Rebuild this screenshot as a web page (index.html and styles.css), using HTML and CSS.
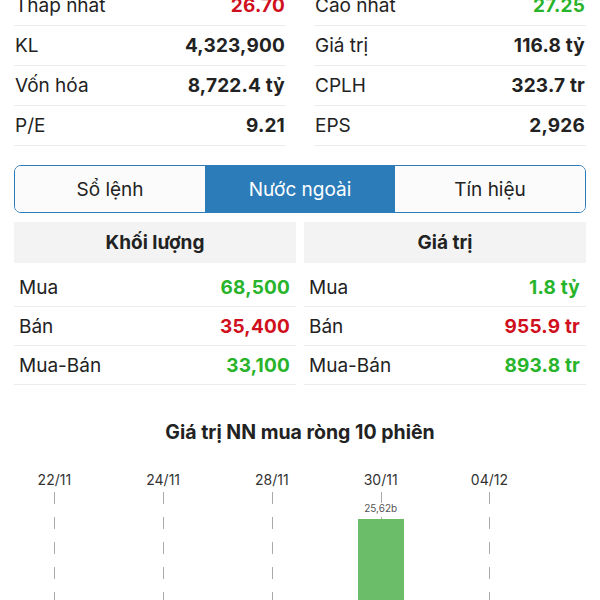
FILE: index.html
```html
<!DOCTYPE html>
<html lang="vi">
<head>
  <meta charset="UTF-8">
  <meta name="viewport" content="width=device-width, initial-scale=1.0">
  <title>Nước ngoài</title>
  <link rel="stylesheet" href="styles.css">
</head>
<body>
  <div class="stats">
    <div class="col">
      <div class="row"><span>Thấp nhất</span><b class="red">26.70</b></div>
      <div class="row"><span>KL</span><b>4,323,900</b></div>
      <div class="row"><span>Vốn hóa</span><b>8,722.4 tỷ</b></div>
      <div class="row"><span>P/E</span><b>9.21</b></div>
    </div>
    <div class="col">
      <div class="row"><span>Cao nhất</span><b class="green">27.25</b></div>
      <div class="row"><span>Giá trị</span><b>116.8 tỷ</b></div>
      <div class="row"><span>CPLH</span><b>323.7 tr</b></div>
      <div class="row"><span>EPS</span><b>2,926</b></div>
    </div>
  </div>

  <div class="tabs">
    <div class="tab">Sổ lệnh</div>
    <div class="tab active">Nước ngoài</div>
    <div class="tab">Tín hiệu</div>
  </div>

  <div class="foreign">
    <div class="table">
      <div class="head">Khối lượng</div>
      <div class="row"><span>Mua</span><b class="green">68,500</b></div>
      <div class="row"><span>Bán</span><b class="red">35,400</b></div>
      <div class="row"><span>Mua-Bán</span><b class="green">33,100</b></div>
    </div>
    <div class="table">
      <div class="head">Giá trị</div>
      <div class="row"><span>Mua</span><b class="green">1.8 tỷ</b></div>
      <div class="row"><span>Bán</span><b class="red">955.9 tr</b></div>
      <div class="row"><span>Mua-Bán</span><b class="green">893.8 tr</b></div>
    </div>
  </div>

  <h2 class="chart-title">Giá trị NN mua ròng 10 phiên</h2>
  <div class="chart">
    <div class="day"><div class="date">22/11</div><div class="plot"></div></div>
    <div class="day"><div class="date">24/11</div><div class="plot"></div></div>
    <div class="day"><div class="date">28/11</div><div class="plot"></div></div>
    <div class="day">
      <div class="date">30/11</div>
      <div class="plot">
        <div class="bar-label">25,62b</div>
        <div class="bar" style="height: 90px"></div>
      </div>
    </div>
    <div class="day"><div class="date">04/12</div><div class="plot"></div></div>
  </div>
</body>
</html>
```

FILE: styles.css
```css
* {
  box-sizing: border-box;
}
body {
  margin: 0;
  font-family: Inter, "Liberation Sans", sans-serif;
  color: #222;
  background: #fff;
  overflow: hidden;
}
.red {
  color: #d0101c;
}
.green {
  color: #27b42a;
}
.stats {
  display: flex;
  gap: 28px;
  padding: 0 14px;
  margin-top: -14px;
}
.col {
  flex: 1;
}
.row {
  display: flex;
  justify-content: space-between;
  align-items: center;
  height: 40px;
  font-size: 19px;
  border-bottom: 1px solid #ececec;
}
.stats .row {
  padding: 0 1px;
}
.row b {
  font-weight: 700;
  letter-spacing: 0.2px;
}
.tabs {
  display: flex;
  margin: 19px 14px 0;
  height: 48px;
  border: 1.5px solid #2b7cb9;
  border-radius: 7px;
  overflow: hidden;
}
.tab {
  flex: 1;
  display: flex;
  align-items: center;
  justify-content: center;
  font-size: 19px;
  color: #222;
  background: #fbfbfb;
}
.tab.active {
  background: #2b7cb9;
  color: #fff;
}
.foreign {
  display: flex;
  gap: 8px;
  padding: 0 14px;
  margin-top: 9px;
}
.table {
  flex: 1;
}
.head {
  height: 41px;
  display: flex;
  align-items: center;
  justify-content: center;
  background: #f3f3f3;
  font-size: 19px;
  font-weight: 700;
  margin-bottom: 5px;
}
.table .row {
  padding: 0 6px 0 5px;
  height: 39px;
}
.chart-title {
  margin: 35px 0 0;
  text-align: center;
  font-size: 19.5px;
  font-weight: 700;
}
.chart {
  display: grid;
  grid-template-columns: repeat(5, 108.75px);
  margin-top: 27px;
}
.day {
  display: flex;
  flex-direction: column;
  align-items: center;
}
.date {
  font-size: 14px;
  color: #333;
  height: 20px;
}
.plot {
  position: relative;
  width: 100%;
  height: 120px;
  display: flex;
  flex-direction: column;
  align-items: center;
  padding-top: 12px;
}
.plot::before {
  content: "";
  position: absolute;
  left: 50%;
  top: 1px;
  bottom: 0;
  width: 1px;
  background: repeating-linear-gradient(to bottom, #aaa 0 12px, transparent 12px 25px);
}
.bar-label {
  position: relative;
  font-size: 10px;
  color: #555;
  height: 10px;
  line-height: 10px;
  background: #fff;
}
.bar {
  position: relative;
  width: 46px;
  margin-top: 6px;
  background: #6bbd69;
}
```
